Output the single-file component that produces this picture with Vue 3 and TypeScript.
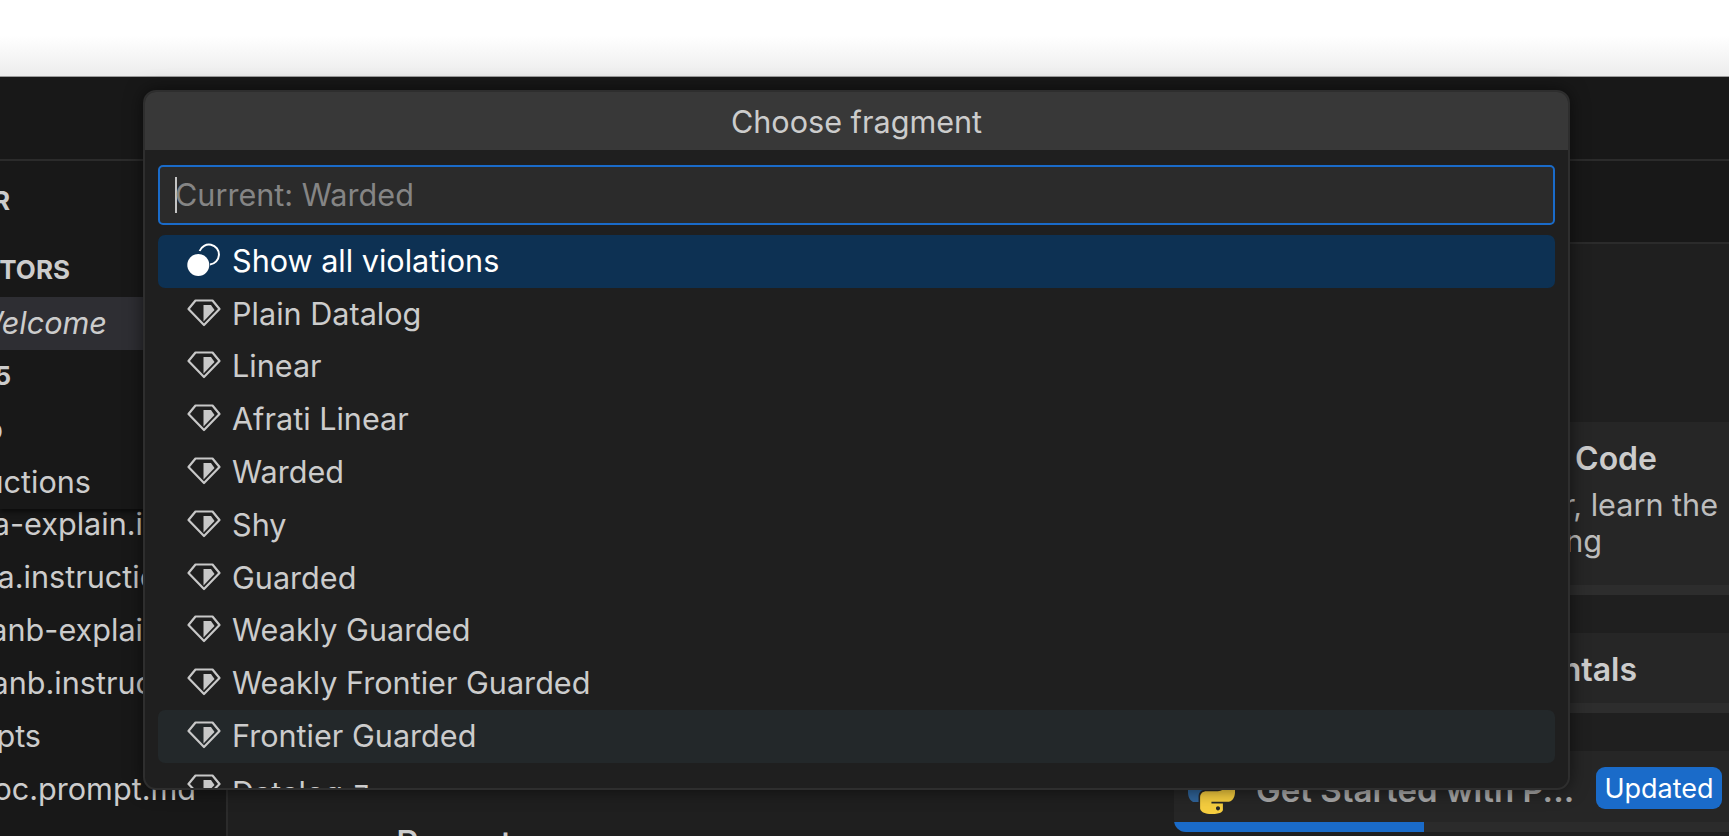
<script setup lang="ts">
interface SideRow { text: string; end: number; kind?: string }
interface Fragment { name: string; mark?: string }

const stickyRows: SideRow[] = [
  { text: 'EXPLORER', end: 10, kind: 'head first' },
  { text: 'OPEN EDITORS', end: 70, kind: 'head' },
  { text: 'Welcome', end: 107, kind: 'active' },
  { text: '2025', end: 11, kind: 'head' },
  { text: 'do', end: 3 },
  { text: 'Instructions', end: 91 },
]
const fileRows: SideRow[] = [
  { text: 'a-explain.i', end: 143 },
  { text: 'a.instructio', end: 158 },
  { text: 'anb-explai', end: 143 },
  { text: 'anb.instruc', end: 153 },
  { text: 'prompts', end: 41 },
  { text: 'doc.prompt.md', end: 196 },
]
const fragments: Fragment[] = [
  { name: 'Plain Datalog' }, { name: 'Linear' }, { name: 'Afrati Linear' }, { name: 'Warded' },
  { name: 'Shy' }, { name: 'Guarded' }, { name: 'Weakly Guarded' },
  { name: 'Weakly Frontier Guarded' }, { name: 'Frontier Guarded' },
  { name: 'Datalog', mark: '\u00a0¬' },
]
const endStyle = (r: SideRow) => ({ width: r.end + 'px' })
</script>

<template>
  <div class="page">
    <div class="browser-bar"></div>
    <div class="workbench">
      <div class="titlebar"></div>
      <div class="body">
        <aside class="sidebar">
          <div class="sticky">
            <div v-for="r in stickyRows" :key="r.text" class="row" :class="r.kind">
              <span class="row-text" :style="endStyle(r)">{{ r.text }}</span>
            </div>
          </div>
          <div class="files">
            <div v-for="r in fileRows" :key="r.text" class="row">
              <span class="row-text" :style="endStyle(r)">{{ r.text }}</span>
            </div>
          </div>
        </aside>
        <main class="editor">
          <div class="tabs"></div>
          <div class="welcome">
            <div class="start-col">
              <h2 class="recent">Recent</h2>
            </div>
            <div class="walk-col">
              <div class="card card-a">
                <div class="line title line-code">Get Started with VS Code</div>
                <div class="line desc line-learn">Customize your editor, learn the</div>
                <div class="line desc line-ng">basics, and start coding</div>
              </div>
              <div class="card card-b">
                <div class="line title line-fund">Learn the Fundamentals</div>
              </div>
              <div class="card card-c">
                <div class="card-c-main">
                  <svg class="py" viewBox="0 0 24 24">
                    <path fill="#2f6398" d="M14.25.18l.9.2.73.26.59.3.45.32.34.34.25.34.16.33.1.3.04.26.02.2-.01.13V8.5l-.05.63-.13.55-.21.46-.26.38-.3.31-.33.25-.35.19-.35.14-.33.1-.3.07-.26.04-.21.02H8.77l-.69.05-.59.14-.5.22-.41.27-.33.32-.27.35-.2.36-.15.37-.1.35-.07.32-.04.27-.02.21v3.06H3.17l-.21-.03-.28-.07-.32-.12-.35-.18-.36-.26-.36-.36-.35-.46-.32-.59-.28-.73-.21-.88-.14-1.05-.05-1.23.06-1.22.16-1.04.24-.87.32-.71.36-.57.4-.44.42-.33.42-.24.4-.16.36-.1.32-.05.24-.01h.16l.06.01h8.16v-.83H6.18l-.01-2.75-.02-.37.05-.34.11-.31.17-.28.25-.26.31-.23.38-.2.44-.18.51-.15.58-.12.64-.1.71-.06.77-.04.84-.02 1.27.05zm-6.3 1.98l-.23.33-.08.41.08.41.23.34.33.22.41.09.41-.09.33-.22.23-.34.08-.41-.08-.41-.23-.33-.33-.22-.41-.09-.41.09z" />
                    <path fill="#f5cd3f" d="M21.04 6.11l.28.06.32.12.35.18.36.27.36.35.35.47.32.59.28.73.21.88.14 1.04.05 1.23-.06 1.23-.16 1.04-.24.86-.32.71-.36.57-.4.45-.42.33-.42.24-.4.16-.36.09-.32.05-.24.02-.16-.01h-8.22v.82h5.84l.01 2.76.02.36-.05.34-.11.31-.17.29-.25.25-.31.24-.38.2-.44.17-.51.15-.58.13-.64.09-.71.07-.77.04-.84.01-1.27-.04-1.07-.14-.9-.2-.73-.25-.59-.3-.45-.33-.34-.34-.25-.34-.16-.33-.1-.3-.04-.25-.02-.2.01-.13v-5.34l.05-.64.13-.54.21-.46.26-.38.3-.32.33-.24.35-.2.35-.14.33-.1.3-.06.26-.04.21-.02.13-.01h5.84l.69-.05.59-.14.5-.21.41-.28.33-.32.27-.35.2-.36.15-.36.1-.35.07-.32.04-.28.02-.21V6.07h2.09l.14.01zm-6.47 14.25l-.23.33-.08.41.08.41.23.33.33.23.41.08.41-.08.33-.23.23-.33.08-.41-.08-.41-.23-.33-.33-.23-.41-.08-.41.08z" />
                  </svg>
                  <span class="py-title">Get Started with P...</span>
                  <span class="badge">Updated</span>
                </div>
                <div class="progress"><div class="progress-fill"></div></div>
              </div>
            </div>
          </div>
        </main>
      </div>
    </div>

    <div class="picker">
      <div class="picker-title">Choose fragment</div>
      <div class="picker-content">
        <div class="input"><span class="caret"></span><span class="placeholder">Current: Warded</span></div>
        <div class="pick selected">
          <svg class="icon icon-sel" viewBox="0 0 34 34">
            <circle cx="11.3" cy="22" r="11" fill="#fff" />
            <path d="M12.6 8A10 10 0 1 1 23 21.5" fill="none" stroke="#fff" stroke-width="2" />
          </svg>
          <span class="label">Show all violations</span>
        </div>
        <div v-for="f in fragments" :key="f.name" class="pick" :class="{ hovered: f.name === 'Frontier Guarded' }">
          <svg class="icon" viewBox="0 0 34 28">
            <path d="M8.5 1.5H25.5L32.5 10 17 26 1.5 10Z" fill="none" stroke="#c8c8c8" stroke-width="2.2" stroke-linejoin="round" />
            <path d="M16.5 6H24L27.5 11 16.5 22.5Z" fill="#c8c8c8" />
          </svg>
          <span class="label">{{ f.name }}<span v-if="f.mark" class="mark">{{ f.mark }}</span></span>
        </div>
      </div>
    </div>
  </div>
</template>

<style>
html, body { margin: 0; background: #181818; overflow: hidden; }
</style>

<style scoped>
.page {
  position: relative;
  display: flex;
  flex-direction: column;
  height: 836px;
  overflow: hidden;
  font-family: Inter, "Noto Sans", sans-serif;
  font-size: 30.6px;
  color: #cccccc;
  background: #181818;
}
.browser-bar {
  height: 76px;
  flex: none;
  background: linear-gradient(#ffffff 0, #ffffff 36px, #ececec 100%);
  border-bottom: 1px solid #9c9c9c;
}
.workbench { flex: 1; display: flex; flex-direction: column; min-height: 0; }
.titlebar { height: 82px; flex: none; border-bottom: 2px solid #2b2b2b; }
.body { flex: 1; display: flex; min-height: 0; }

.sidebar {
  width: 226px;
  flex: none;
  overflow: hidden;
  border-right: 2px solid #2b2b2b;
  background: #181818;
}
.sticky {
  position: relative;
  z-index: 1;
  padding-top: 13px;
  background: #181818;
  box-shadow: 0 3px 5px rgba(0, 0, 0, 0.55);
}
.files { margin-top: -11px; }
.row { height: 53px; flex: none; display: flex; align-items: center; white-space: nowrap; }
.row.first { margin-bottom: 17px; font-weight: 700; font-size: 26px; padding-top: 2px; box-sizing: border-box; }
.row.head { font-weight: 700; font-size: 26px; }
.row.active { background: #2e2e33; font-style: italic; }
.row-text { display: flex; justify-content: flex-end; flex: none; margin-top: -2px; }

.editor { flex: 1; min-width: 0; display: flex; flex-direction: column; background: #1f1f1f; }
.tabs { height: 81px; flex: none; background: #181818; border-bottom: 2px solid #2b2b2b; }
.welcome { flex: 1; display: flex; min-height: 0; overflow: hidden; }
.start-col { flex: 1; min-width: 0; padding: 577px 0 0 168px; }
.recent { margin: 0; font-size: 35px; font-weight: 500; line-height: 44px; color: #cccccc; }
.walk-col { width: 555px; flex: none; padding-top: 178px; display: flex; flex-direction: column; gap: 38px; }

.card { background: #262626; box-sizing: border-box; flex: none; border-radius: 8px 0 0 8px; }
.card-a { height: 173px; border-bottom: 10px solid #2d2d2d; padding-top: 18px; }
.card-b { height: 80px; border-bottom: 10px solid #2d2d2d; padding-top: 18px; }
.card-c { height: 81px; display: flex; flex-direction: column; overflow: hidden; border-radius: 10px 0 0 12px; }
.line { display: flex; justify-content: flex-end; white-space: nowrap; }
.title { font-weight: 600; line-height: 38px; font-size: 32px; }
.desc { line-height: 36px; color: #bdbdbd; }
.line-code { padding-right: 72px; margin-bottom: 9px; }
.line-learn { padding-right: 11px; }
.line-ng { padding-right: 127px; }
.line-fund { padding-right: 92px; }

.card-c-main { flex: 1; display: flex; align-items: center; padding: 0 7px 0 14px; }
.py { width: 47px; height: 47px; flex: none; margin-top: 7px; }
.py-title { margin-left: 21px; color: #a6a6a6; font-weight: 600; font-size: 33px; white-space: nowrap; flex: 1; margin-top: 7px; }
.badge {
  background: #1a6bc9;
  color: #ffffff;
  border-radius: 9px;
  width: 126px;
  height: 42px;
  flex: none;
  display: flex;
  align-items: center;
  justify-content: center;
  font-size: 27px;
  margin-top: 3px;
}
.progress { height: 10px; flex: none; background: #2b2b2b; }
.progress-fill { width: 250px; height: 100%; background: #1a6bc9; }

.picker {
  position: absolute;
  left: 143px;
  top: 90px;
  width: 1427px;
  height: 700px;
  box-sizing: border-box;
  z-index: 5;
  border: 2px solid #2e2e2e;
  border-radius: 13px;
  background: #1f1f1f;
  box-shadow: 0 0 18px rgba(0, 0, 0, 0.55);
  overflow: hidden;
}
.picker-title {
  height: 58px;
  background: #383838;
  display: flex;
  align-items: center;
  justify-content: center;
}
.picker-content { padding: 15px 13px 0; }
.input {
  height: 60px;
  box-sizing: border-box;
  border: 2px solid #1a6bc9;
  border-radius: 5px;
  background: #2b2b2b;
  display: flex;
  align-items: center;
  padding-left: 15px;
  margin-bottom: 10px;
}
.caret { width: 2px; height: 36px; background: #c4c4c4; flex: none; margin-right: -2px; }
.placeholder { color: #858585; margin-top: -2px; }
.pick {
  height: 52.8px;
  display: flex;
  align-items: center;
  border-radius: 7px;
  padding-left: 29px;
  white-space: nowrap;
}
.pick.selected { background: #0d3153; color: #ffffff; }
.pick.hovered { background: #23282a; }
.label { margin-top: -2px; }
.mark { vertical-align: 8px; }
.icon { width: 34px; height: 28px; flex: none; margin-right: 11px; margin-top: -3px; }
.icon-sel { height: 34px; margin-top: -3px; }
</style>
